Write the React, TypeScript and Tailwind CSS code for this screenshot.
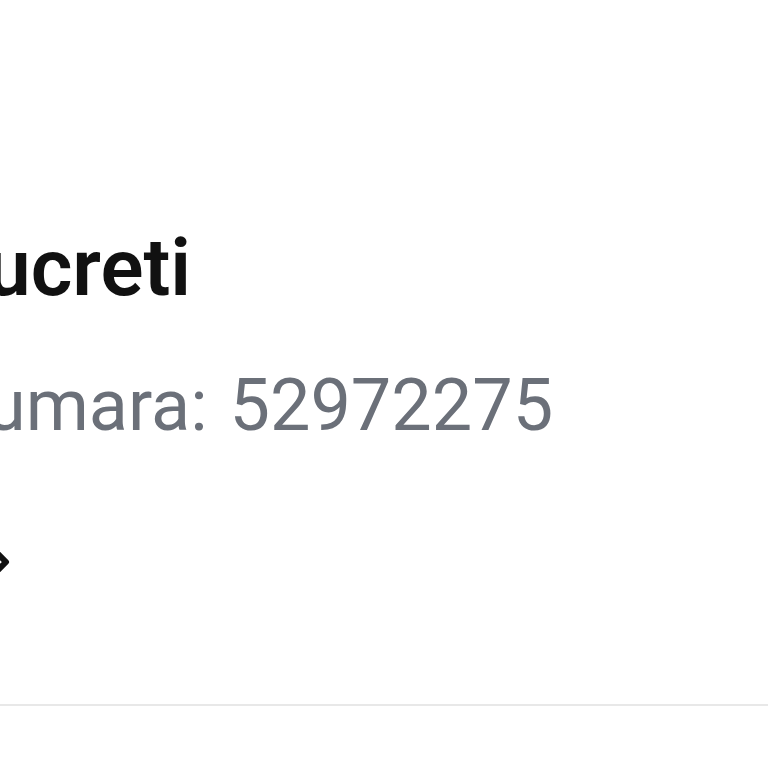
import React from 'react';

export default function App() {
  return (
    <div className="w-[768px] h-[768px] overflow-hidden bg-white" style={{ fontFamily: 'Roboto, "Noto Sans", sans-serif' }}>
      <div className="pt-[228px] flex flex-col">
        <h1 className="-ml-[14px] text-[80px] leading-[80px] font-semibold text-[#111111] whitespace-nowrap">ucreti</h1>
        <p className="mt-[62px] -ml-[14px] text-[72px] leading-[72px] text-[#6b7079] whitespace-nowrap [word-spacing:4px]">umara: 52972275</p>
        <div className="mt-[100px] -ml-[22px] h-[40px]">
          <svg width="40" height="40" viewBox="0 0 40 40" fill="none" stroke="#111111" strokeWidth="6" strokeLinecap="round" strokeLinejoin="round">
            <polyline points="12,4 28,20 12,36" />
          </svg>
        </div>
        <div className="mt-[122px] h-[2px] bg-[#e8e8e8]" />
      </div>
    </div>
  );
}
